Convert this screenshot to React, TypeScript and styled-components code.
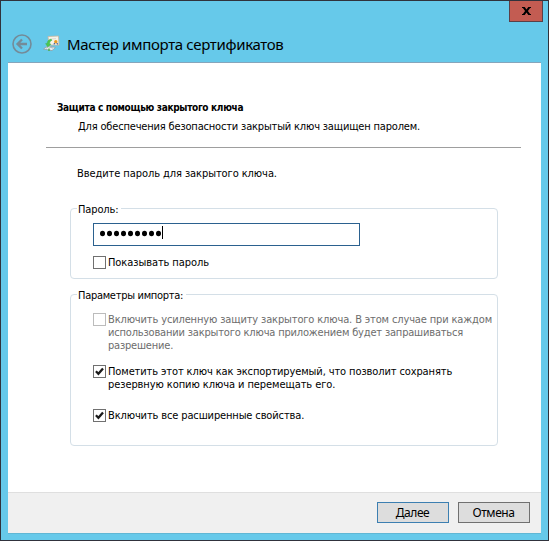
import React from 'react';
import styled, { createGlobalStyle } from 'styled-components';

const GlobalStyle = createGlobalStyle`
  * { box-sizing: border-box; }
  body { margin: 0; overflow: hidden; }
`;

const Window = styled.main`
  width: 549px;
  height: 541px;
  display: flex;
  flex-direction: column;
  padding: 0 7px 7px;
  background: #66c9ea;
  border: 1px solid #30323c;
  font: 11px/13px 'DejaVu Sans Condensed', 'DejaVu Sans', sans-serif;
  font-stretch: condensed;
  color: #000;
`;

const TitleBar = styled.div`
  height: 27px;
  flex: none;
  display: flex;
  justify-content: flex-end;
  margin-right: -2px;
`;

const CloseButton = styled.button`
  width: 34px;
  height: 21px;
  padding: 0;
  display: flex;
  align-items: center;
  justify-content: center;
  background: #c35c52;
  border: 1px solid #5b3f47;
  border-top: 0;
`;

const Header = styled.header`
  height: 35px;
  flex: none;
  display: flex;
  align-items: center;
  padding: 0 0 2px 4px;
  border-bottom: 1px solid #86a5bb;
`;

const WizardIcon = styled.svg`
  margin: 0 7px 2px 11px;
`;

const Title = styled.h1`
  margin: 0;
  font: 15px/22px 'Noto Sans', sans-serif;
  letter-spacing: -0.34px;
  white-space: nowrap;
`;

const Page = styled.section`
  flex: 1;
  background: #fff;
  padding: 38px 20px 0 38px;
`;

const Heading = styled.h2`
  margin: 0 0 0 11px;
  font-size: 10px;
  line-height: 13px;
  font-weight: bold;
  letter-spacing: -0.31px;
`;

const Line = styled.span<{ $spacing?: number }>`
  display: block;
  white-space: nowrap;
  letter-spacing: ${({ $spacing = -0.13 }) => $spacing}px;
`;

const Subheading = styled.div`
  margin: 6px 0 0 32px;
`;

const Divider = styled.hr`
  height: 1px;
  margin: 14px 0 19px;
  border: 0;
  background: #9e9e9e;
`;

const Prompt = styled.div`
  margin-left: 31px;
`;

const Group = styled.fieldset<{ $height: number; $gap: number }>`
  width: 428px;
  height: ${({ $height }) => $height}px;
  margin: ${({ $gap }) => $gap}px 0 0 24px;
  padding: 0 0 0 22px;
  border: 1px solid #d4dfe7;
  border-radius: 4px;
`;

const Legend = styled.legend`
  height: 11px;
  margin-left: -16px;
  padding: 0 3px 0 1px;
`;

const PasswordField = styled.div`
  width: 267px;
  height: 23px;
  margin: 9px 0 10px;
  padding: 0 0 3px 6px;
  display: flex;
  align-items: center;
  border: 1px solid #2b618f;
`;

const Dots = styled.svg`
  display: block;
`;

const Option = styled.label<{ $gap?: number; $disabled?: boolean }>`
  display: flex;
  gap: 2px;
  margin-top: ${({ $gap = 0 }) => $gap}px;
  color: ${({ $disabled }) => ($disabled ? '#6d6d6d' : '#000')};
`;

const Box = styled.span<{ $disabled?: boolean }>`
  width: 13px;
  height: 13px;
  flex: none;
  display: block;
  border: 1px solid ${({ $disabled }) => ($disabled ? '#bcbcbc' : '#707070')};
  background: #fff;
`;

const Footer = styled.footer`
  height: 41px;
  flex: none;
  display: flex;
  justify-content: flex-end;
  gap: 9px;
  padding: 9px 11px 0;
  background: #f0f0f0;
  border-top: 1px solid #dfdfdf;
  box-shadow: 0 1px 0 #60b7d5;
`;

const PushButton = styled.button<{ $primary?: boolean }>`
  width: 72px;
  height: 21px;
  padding: 0 1px 0 0;
  background: #ddd;
  border: 1px solid ${({ $primary }) => ($primary ? '#3c7fb1' : '#707070')};
  font: 12px/18px 'Noto Sans', sans-serif;
  letter-spacing: -0.4px;
  color: #000;
`;

function Check() {
  return (
    <svg width="11" height="11" viewBox="0 0 11 11" display="block">
      <path d="M1.9 5.2 4.4 7.7 9 2.4" fill="none" stroke="#1b1b1b" strokeWidth="2.3" />
    </svg>
  );
}

function BackIcon() {
  return (
    <svg width="20" height="20" viewBox="0 0 20 20">
      <g fill="none" stroke="#748b98">
        <circle cx="10" cy="10" r="9" strokeWidth="1.6" />
        <path d="M15 10H6M10 5.5 5.5 10 10 14.5" strokeWidth="2.3" />
      </g>
    </svg>
  );
}

function CertificateIcon() {
  return (
    <WizardIcon width="17" height="17" viewBox="0 0 17 17">
      <path d="M5 1.5 15.5 1 16 10 6 10z" fill="#f6f3e9" stroke="#c9b69d" strokeWidth=".8" />
      <path d="M8 4 13 3.6" stroke="#dedbd2" />
      <path d="M0.5 14 5 10.8 12.5 12.5 9 15.6z" fill="#e9eef0" stroke="#8f9fa6" strokeWidth=".8" />
      <path d="M3 13.2 5.5 11.8 10 13" fill="none" stroke="#a9b7bd" />
      <path d="M8 4C5.2 4.8 4.2 6.5 4.2 8.6H2.6L4.8 12 8 9H6.6C6.6 7.3 7.2 6 9 5.2z" fill="#4dc750" stroke="#38ae49" strokeWidth=".4" />
      <circle cx="12.8" cy="6.7" r="1.7" fill="#e89a20" />
      <path d="M11.8 8 10.8 9.3M13.8 8 14.8 9.3" stroke="#3c5da5" strokeWidth="1.1" />
      <path d="M6 13.5V16" stroke="#43af39" strokeWidth="1.3" />
    </WizardIcon>
  );
}

export default function App() {
  return (
    <>
      <GlobalStyle />
      <Window>
        <TitleBar>
          <CloseButton aria-label="Закрыть">
            <svg width="9" height="8" viewBox="0 0 10 8" preserveAspectRatio="none">
              <path d="M0 0H3L5 2.5 7 0H10V1H9L6.6 4 9 7H10V8H7L5 5.5 3 8H0V7H1L3.4 4 1 1H0z" fill="#000" />
            </svg>
          </CloseButton>
        </TitleBar>
        <Header>
          <BackIcon />
          <CertificateIcon />
          <Title>Мастер импорта сертификатов</Title>
        </Header>
        <Page>
          <Heading>Защита с помощью закрытого ключа</Heading>
          <Subheading>
            <Line $spacing={-0.175}>Для обеспечения безопасности закрытый ключ защищен паролем.</Line>
          </Subheading>
          <Divider />
          <Prompt>
            <Line $spacing={-0.08}>Введите пароль для закрытого ключа.</Line>
          </Prompt>
          <Group $height={76} $gap={23}>
            <Legend>
              <Line>Пароль:</Line>
            </Legend>
            <PasswordField>
              <Dots width="66" height="14" viewBox="0 0 66 14">
                {Array.from({ length: 9 }, (_, i) => (
                  <ellipse key={i} cx={2.5 + i * 7} cy="7.5" rx="2.5" ry="2.8" />
                ))}
                <path d="M62.5 0V13" stroke="#000" />
              </Dots>
            </PasswordField>
            <Option>
              <Box />
              <Line $spacing={-0.08}>Показывать пароль</Line>
            </Option>
          </Group>
          <Group $height={157} $gap={10}>
            <Legend>
              <Line $spacing={-0.29}>Параметры импорта:</Line>
            </Legend>
            <Option $gap={13} $disabled>
              <Box $disabled />
              <div>
                <Line $spacing={-0.14}>Включить усиленную защиту закрытого ключа. В этом случае при каждом</Line>
                <Line $spacing={-0.18}>использовании закрытого ключа приложением будет запрашиваться</Line>
                <Line $spacing={-0.2}>разрешение.</Line>
              </div>
            </Option>
            <Option $gap={13}>
              <Box>
                <Check />
              </Box>
              <div>
                <Line $spacing={-0.11}>Пометить этот ключ как экспортируемый, что позволит сохранять</Line>
                <Line $spacing={-0.08}>резервную копию ключа и перемещать его.</Line>
              </div>
            </Option>
            <Option $gap={18}>
              <Box>
                <Check />
              </Box>
              <Line>Включить все расширенные свойства.</Line>
            </Option>
          </Group>
        </Page>
        <Footer>
          <PushButton $primary>Далее</PushButton>
          <PushButton>Отмена</PushButton>
        </Footer>
      </Window>
    </>
  );
}
